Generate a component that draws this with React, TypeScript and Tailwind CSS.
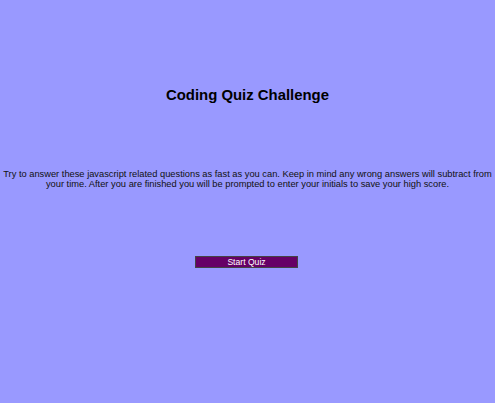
import React from "react";

const App = () => {
  return (
    <main className="min-h-screen w-full bg-[#9999ff] text-black font-['Liberation_Sans',Arial,sans-serif] flex flex-col items-center pt-[87px]">
      <h1 className="text-[14.9px] leading-[17px] font-bold">Coding Quiz Challenge</h1>

      <p className="mt-[65px] text-[9.3px] leading-[10px] text-center text-[#111]">
        Try to answer these javascript related questions as fast as you can. Keep in mind any wrong answers will subtract from
        your time. After you are finished you will be prompted to enter your initials to save your high score.
      </p>

      <button className="mt-[67px] -translate-x-[1px] w-[103px] h-[12px] bg-[#660066] border border-[#444] text-white text-[8.6px] leading-[9px] flex items-center justify-center">
        Start Quiz
      </button>
    </main>
  );
};

export default App;
